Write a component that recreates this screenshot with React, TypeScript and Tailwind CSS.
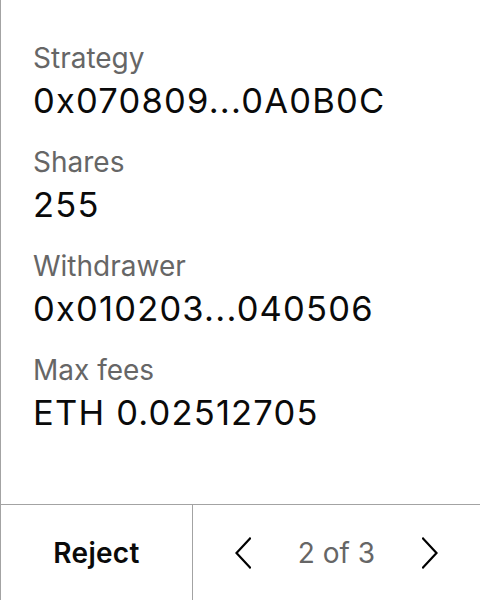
import React from 'react';

const rows = [
  { label: 'Strategy', value: '0x070809...0A0B0C' },
  { label: 'Shares', value: '255' },
  { label: 'Withdrawer', value: '0x010203...040506' },
  { label: 'Max fees', value: 'ETH 0.02512705' },
];

const Chevron = ({ dir }: { dir: 'left' | 'right' }) => (
  <svg width="16" height="32" viewBox="0 0 16 32" fill="none" stroke="#000" strokeWidth="2.2" strokeLinecap="square">
    {dir === 'left' ? <path d="M15 1.5 1.5 16 15 30.5" /> : <path d="M1 1.5 14.5 16 1 30.5" />}
  </svg>
);

export default function App() {
  return (
    <div className="w-[480px] h-[600px] bg-white border-l border-[#a3a3a3] flex flex-col" style={{ fontFamily: 'Inter, sans-serif' }}>
      <div className="flex-1 flex flex-col pl-[32px] pt-[39px] gap-[18px]">
        {rows.map((r) => (
          <div key={r.label} className="flex flex-col">
            <span className="text-[28px] leading-[38px] text-[#666666]">{r.label}</span>
            <span className="text-[34.5px] leading-[48px] tracking-[1.2px] text-[#0a0a0a]">{r.value}</span>
          </div>
        ))}
      </div>
      <div className="h-[96px] border-t border-[#a3a3a3] flex">
        <button className="w-[192px] border-r border-[#a3a3a3] flex items-center justify-center text-[28px] font-semibold tracking-[0.3px] text-[#0a0a0a]">
          Reject
        </button>
        <div className="flex-1 flex items-center justify-between px-[42px]">
          <Chevron dir="left" />
          <span className="text-[28px] text-[#666666]">2 of 3</span>
          <Chevron dir="right" />
        </div>
      </div>
    </div>
  );
}
